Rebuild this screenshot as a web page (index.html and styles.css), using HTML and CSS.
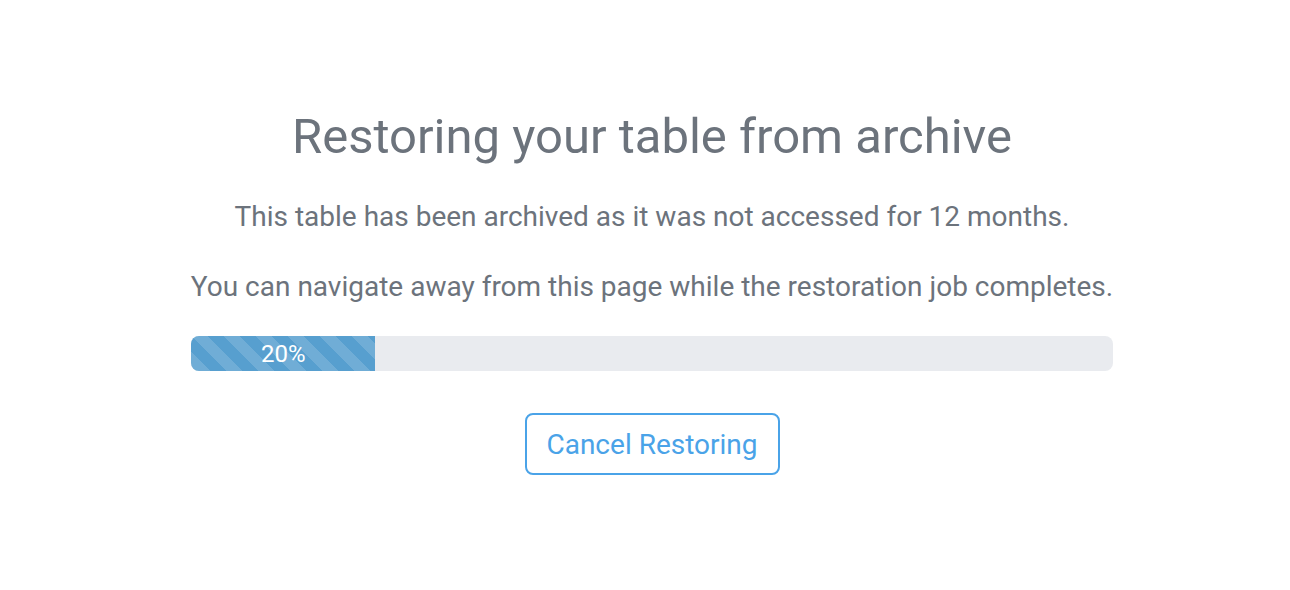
FILE: index.html
```html
<!DOCTYPE html>
<html>
<head>
<meta charset="utf-8" />
<title>Restoring table</title>
<link rel="stylesheet" href="styles.css">
</head>
<body>
	<div class="restore">
		<h1 class="restore-title">Restoring your table from archive</h1>
		<p class="restore-text">This table has been archived as it was not accessed for 12 months.</p>
		<p class="restore-text">You can navigate away from this page while the restoration job completes.</p>
		<div class="progress">
			<div class="progress-bar" style="width: 20%">20%</div>
		</div>
		<button class="btn-cancel">Cancel Restoring</button>
	</div>
</body>
</html>
```

FILE: styles.css
```css
body{
    margin:0px;
    padding-left:14px;
    background:#fff;
    font-family: Roboto, "Noto Sans", Arial, sans-serif;
    color:#6c737c;
}
.restore{
    width:922px;
    margin:0 auto;
    padding-top:109px;
    display:flex;
    flex-direction:column;
    align-items:center;
}
.restore-title{
    margin:0px;
    font-size:49px;
    font-weight:400;
    line-height:56px;
    white-space:nowrap;
}
.restore-text{
    margin:0px;
    font-size:28px;
    line-height:33px;
    white-space:nowrap;
}
.restore-title + .restore-text{
    margin-top:35px;
}
.restore-text + .restore-text{
    margin-top:37px;
}
.progress{
    align-self:stretch;
    height:35px;
    margin-top:33px;
    background:#e9ebef;
    border-radius:8px;
    overflow:hidden;
    display:flex;
}
.progress-bar{
    background-color:#579fcf;
    background-image:linear-gradient(45deg, rgba(255,255,255,.15) 25%, transparent 25%, transparent 50%, rgba(255,255,255,.15) 50%, rgba(255,255,255,.15) 75%, transparent 75%, transparent);
    background-size:32px 32px;
    color:#fff;
    font-size:24px;
    display:flex;
    align-items:center;
    justify-content:center;
}
.btn-cancel{
    margin-top:42px;
    width:255px;
    height:62px;
    background:#fff;
    border:2px solid #4aa3e8;
    border-radius:8px;
    color:#4aa3e8;
    font-family:inherit;
    font-size:28px;
    cursor:pointer;
}
```
